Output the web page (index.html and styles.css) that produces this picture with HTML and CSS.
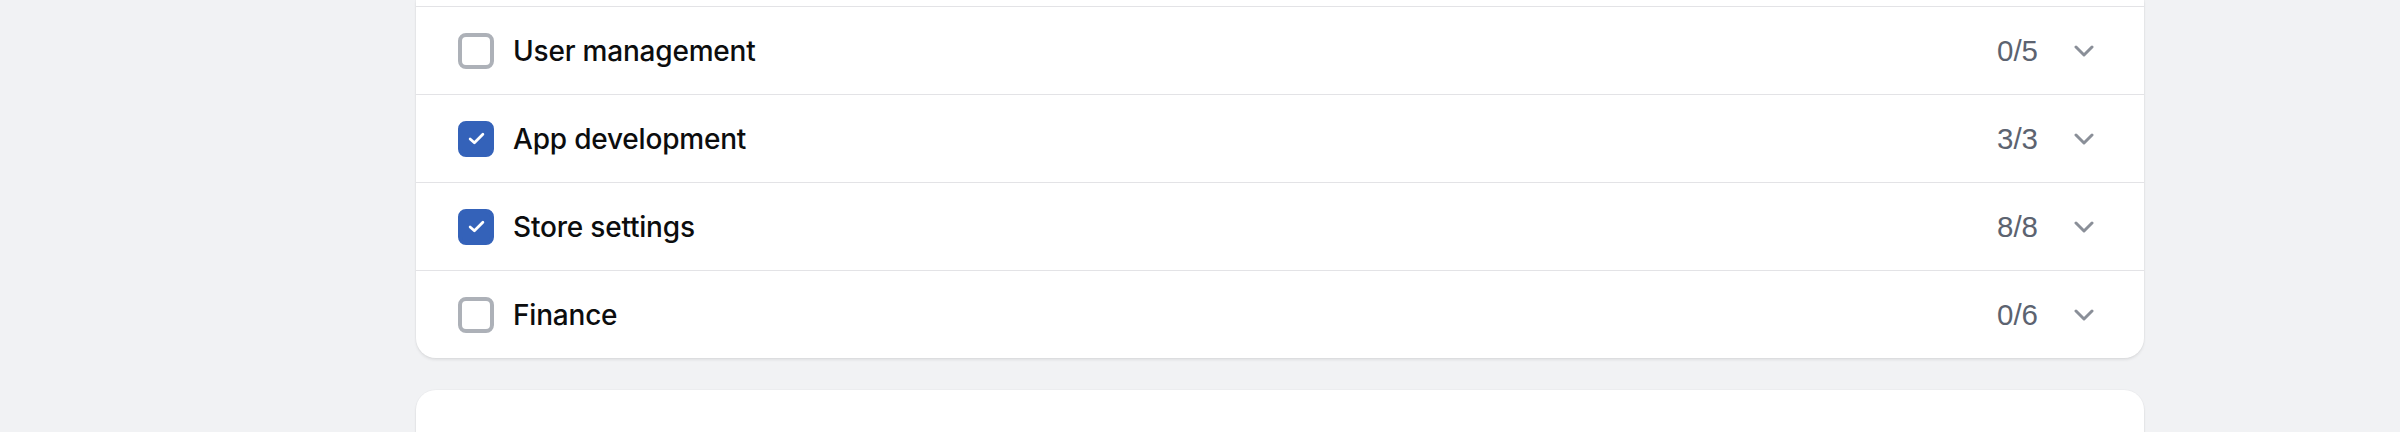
FILE: index.html
```html
<!DOCTYPE html>
<html>
<head>
<meta charset="utf-8">
<link rel="stylesheet" href="styles.css">
</head>
<body>
<main class="page">
  <section class="card card-list">
    <div class="row-tail"></div>
    <div class="row">
      <span class="checkbox"></span>
      <span class="label">User management</span>
      <span class="count">0/5</span>
      <svg class="chevron" viewBox="0 0 20 12" aria-hidden="true"><path d="M2 2l8 8 8-8"/></svg>
    </div>
    <div class="row">
      <span class="checkbox checked"><svg viewBox="0 0 16 12" aria-hidden="true"><path d="M2 6.5l4 3.5 8-8"/></svg></span>
      <span class="label">App development</span>
      <span class="count">3/3</span>
      <svg class="chevron" viewBox="0 0 20 12" aria-hidden="true"><path d="M2 2l8 8 8-8"/></svg>
    </div>
    <div class="row">
      <span class="checkbox checked"><svg viewBox="0 0 16 12" aria-hidden="true"><path d="M2 6.5l4 3.5 8-8"/></svg></span>
      <span class="label">Store settings</span>
      <span class="count">8/8</span>
      <svg class="chevron" viewBox="0 0 20 12" aria-hidden="true"><path d="M2 2l8 8 8-8"/></svg>
    </div>
    <div class="row">
      <span class="checkbox"></span>
      <span class="label">Finance</span>
      <span class="count">0/6</span>
      <svg class="chevron" viewBox="0 0 20 12" aria-hidden="true"><path d="M2 2l8 8 8-8"/></svg>
    </div>
  </section>
  <section class="card card-next"></section>
</main>
</body>
</html>
```

FILE: styles.css
```css
html, body {
  margin: 0;
  padding: 0;
  background: #f1f2f4;
  height: 100%;
  overflow: hidden;
}

.page {
  margin-left: 416px;
  width: 1728px;
  display: flex;
  flex-direction: column;
  gap: 32px;
}

.card {
  background: #ffffff;
  box-shadow: 0 2px 3px rgba(0, 0, 0, 0.08), 0 0 0 1px rgba(0, 0, 0, 0.02);
}

.card-list {
  border-radius: 0 0 20px 20px;
}

.card-next {
  border-radius: 20px 20px 0 0;
  height: 80px;
}

.row-tail {
  height: 6px;
}

.row {
  display: flex;
  align-items: center;
  height: 87px;
  border-top: 1px solid #e3e3e6;
  padding: 0 50px 0 42px;
}

.checkbox {
  box-sizing: border-box;
  width: 36px;
  height: 36px;
  border: 4px solid #adb1b8;
  border-radius: 8px;
  display: flex;
  align-items: center;
  justify-content: center;
  flex: none;
}

.checkbox.checked {
  background: #3462b9;
  border-color: #3462b9;
}

.checkbox svg {
  width: 17px;
  height: 13px;
  fill: none;
  stroke: #ffffff;
  stroke-width: 2.6;
  stroke-linecap: round;
  stroke-linejoin: round;
}

.label {
  margin-left: 19px;
  font-family: Inter, "Noto Sans", sans-serif;
  font-size: 28px;
  font-weight: 500;
  letter-spacing: -0.2px;
  color: #0c0d0e;
  flex: 1;
}

.count {
  font-family: "Liberation Sans", Arial, sans-serif;
  font-size: 29.5px;
  color: #5c6370;
}

.chevron {
  margin-left: 36px;
  width: 20px;
  height: 12px;
  fill: none;
  stroke: #8a8f98;
  stroke-width: 3;
  stroke-linecap: round;
  stroke-linejoin: round;
}
```
